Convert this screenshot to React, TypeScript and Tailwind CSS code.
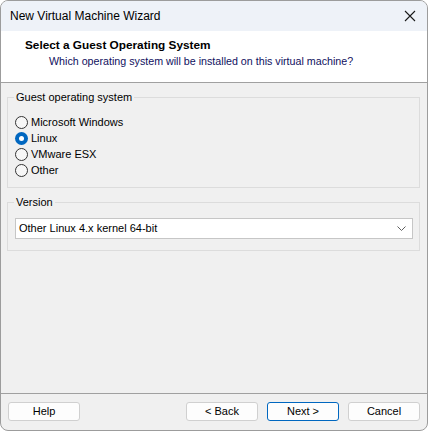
import React, { useState } from "react";

const font = { fontFamily: '"Liberation Sans", Arial, sans-serif' };

const oses = ["Microsoft Windows", "Linux", "VMware ESX", "Other"];

const Radio = ({ checked }: { checked: boolean }) =>
    checked ? (
        <span className="w-[13px] h-[13px] rounded-full bg-[#0067c0] flex items-center justify-center shrink-0">
            <span className="w-[5px] h-[5px] rounded-full bg-white" />
        </span>
    ) : (
        <span className="w-[13px] h-[13px] rounded-full border border-[#333333] bg-[#f7f7f7] shrink-0" />
    );

const Button = ({ label, primary }: { label: string; primary?: boolean }) => (
    <button
        className={
            primary
                ? "w-[72px] h-[19px] rounded-[3px] border border-[#0067c0] bg-[#fdfdfd] text-[11px] text-black leading-none"
                : "w-[72px] h-[19px] rounded-[3px] border border-[#d0d0d0] bg-[#fdfdfd] text-[11px] text-black leading-none"
        }
    >
        {label}
    </button>
);

export default function App() {
    const [os, setOs] = useState("Linux");

    return (
        <div className="w-[428px] h-[431px] bg-white" style={font}>
            <div className="w-full h-full flex flex-col border border-[#9c9c9c] rounded-t-[8px] rounded-b-[8px] overflow-hidden bg-[#f0f0f0]">
                {/* title bar */}
                <div className="h-[30px] shrink-0 bg-[#eef2f8] flex items-center justify-between pl-[9px] pr-[10px]">
                    <span className="text-[12px] text-black">New Virtual Machine Wizard</span>
                    <svg width="12" height="12" viewBox="0 0 12 12" className="mr-[1px]">
                        <path d="M1 1 L11 11 M11 1 L1 11" stroke="#1a1a1a" strokeWidth="1.1" />
                    </svg>
                </div>

                {/* header */}
                <div className="h-[52px] shrink-0 bg-white border-b border-[#a0a0a0] pl-[24px] pt-[7px]">
                    <div className="text-[11.8px] font-bold text-black leading-[14px]">Select a Guest Operating System</div>
                    <div className="text-[10.7px] text-[#101060] leading-[14px] pl-[24px] mt-[2px]">
                        Which operating system will be installed on this virtual machine?
                    </div>
                </div>

                {/* body */}
                <div className="flex-1 pl-[6px] pr-[7px] pt-[8px]">
                    <fieldset className="border border-[#dcdcdc] px-[7px] pb-[9px]">
                        <legend className="text-[11px] text-black px-[2px] ml-[-1px] leading-[13px]">Guest operating system</legend>
                        <div className="flex flex-col mt-[10px]">
                            {oses.map((o) => (
                                <label
                                    key={o}
                                    onClick={() => setOs(o)}
                                    className="h-[16px] flex items-center gap-[3px] text-[11px] text-black cursor-default"
                                >
                                    <Radio checked={os === o} />
                                    <span>{o}</span>
                                </label>
                            ))}
                        </div>
                    </fieldset>

                    <fieldset className="border border-[#dcdcdc] pl-[7px] pr-[6px] pb-[11px] mt-[8px]">
                        <legend className="text-[11px] text-black px-[2px] ml-[-1px] leading-[13px]">Version</legend>
                        <div className="mt-[9px] h-[21px] bg-white border border-[#c6c6c6] flex items-center justify-between pl-[3px] pr-[6px]">
                            <span className="text-[11px] text-black">Other Linux 4.x kernel 64-bit</span>
                            <svg width="9" height="5" viewBox="0 0 9 5">
                                <path d="M0.5 0.5 L4.5 4.5 L8.5 0.5" stroke="#606060" strokeWidth="1" fill="none" />
                            </svg>
                        </div>
                    </fieldset>
                </div>

                {/* footer */}
                <div className="h-[37px] shrink-0 border-t border-[#a0a0a0] flex items-start pt-[8px] px-[7px]">
                    <Button label="Help" />
                    <div className="flex-1" />
                    <div className="flex gap-[9px]">
                        <Button label="< Back" />
                        <Button label="Next >" primary />
                        <Button label="Cancel" />
                    </div>
                </div>
            </div>
        </div>
    );
}
